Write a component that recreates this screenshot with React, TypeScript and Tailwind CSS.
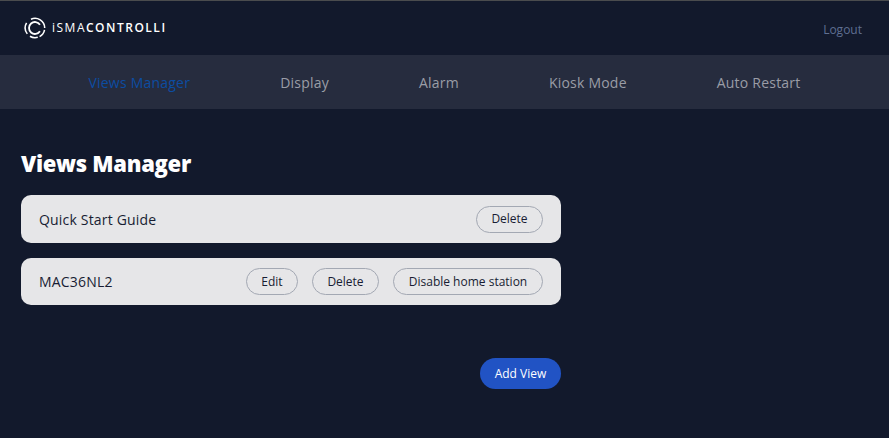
export default function App() {
  const tabs = ["Views Manager", "Display", "Alarm", "Kiosk Mode", "Auto Restart"];
  const btn = "h-[27px] rounded-full border border-[#a3a8b3] text-[12px] leading-none text-[#181d33] bg-transparent";
  return (
    <div className="w-[889px] h-[438px] overflow-hidden bg-[#12192c] font-['Open_Sans',sans-serif] border-t border-[#4a4c4e]">
      <header className="h-[54px] flex items-center justify-between pl-[24px] pr-[27px]">
        <div className="flex items-center gap-[6px]">
          <svg width="22" height="22" viewBox="0 0 24 24" fill="none" stroke="#fff" strokeLinecap="butt">
            <path d="M7.6 2.4A10.6 10.6 0 0 1 22.6 12" strokeWidth="1.7" />
            <path d="M22.4 14a10.6 10.6 0 0 1-5.4 7.4" strokeWidth="1.7" />
            <path d="M15 22.2A10.6 10.6 0 0 1 6.5 21" strokeWidth="1.7" />
            <path d="M3.6 18.4A10.6 10.6 0 0 1 2.8 6.5" strokeWidth="1.7" />
            <path d="M17.4 8.4A6.5 6.5 0 1 0 17.4 15.6" strokeWidth="2" />
          </svg>
          <span className="text-[12px] leading-none text-white tracking-[1.5px] whitespace-nowrap">
            iSMA<span className="font-semibold">CONTROLLI</span>
          </span>
        </div>
        <a className="pt-[3px] text-[12px] text-[#5f6f92]">Logout</a>
      </header>
      <nav className="h-[54px] bg-[#262c3e] flex items-center justify-center gap-[90px] text-[14px] tracking-[0.22px]">
        {tabs.map((t, i) => (
          <a key={t} className={i === 0 ? "text-[#0c4da2]" : "text-[#9a9da6]"}>{t}</a>
        ))}
      </nav>
      <main className="w-[540px] ml-[21px] pt-[39px]">
        <h1 className="text-[22px] leading-[30px] font-extrabold tracking-[-0.3px] text-white">Views Manager</h1>
        <div className="mt-[17px] h-[48px] rounded-[10px] bg-[#e6e6e8] flex items-center justify-between px-[18px] text-[14px] text-[#181d33]">
          <span className="tracking-[0.18px]">Quick Start Guide</span>
          <button className={btn + " w-[67px] h-[26px]"}>Delete</button>
        </div>
        <div className="mt-[15px] h-[47px] rounded-[10px] bg-[#e6e6e8] flex items-center px-[18px] text-[14px] text-[#181d33]">
          <span className="mr-auto tracking-[0.2px]">MAC36NL2</span>
          <div className="flex gap-[14px]">
            <button className={btn + " w-[52px]"}>Edit</button>
            <button className={btn + " w-[67px]"}>Delete</button>
            <button className={btn + " w-[150px]"}>Disable home station</button>
          </div>
        </div>
        <div className="mt-[53px] flex justify-end">
          <button className="h-[31px] w-[81px] rounded-full bg-[#2153c4] text-white text-[12px] font-medium">Add View</button>
        </div>
      </main>
    </div>
  );
}
